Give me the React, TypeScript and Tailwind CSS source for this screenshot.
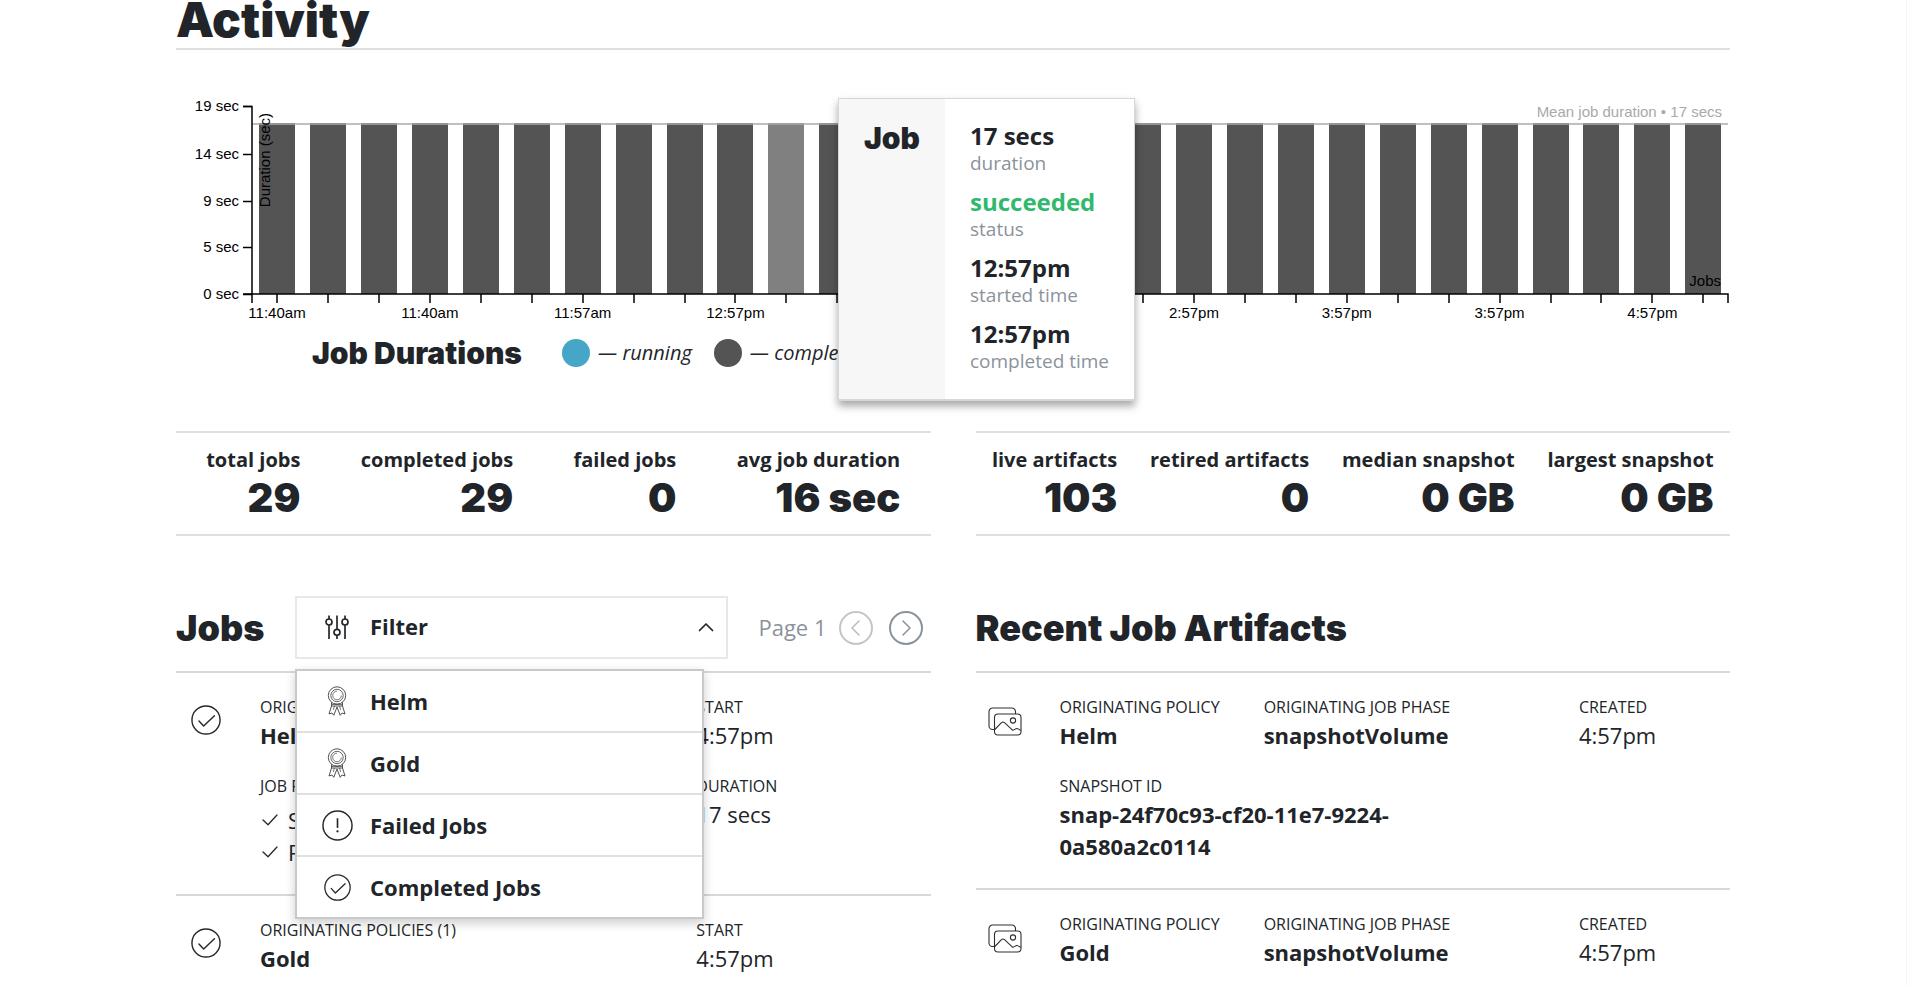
import { useState, type ReactNode } from "react";

const heading = "font-['Inter',sans-serif] font-black text-[#212529]";

/* ---------- icons ---------- */

function CheckCircle({ className }: { className: string }) {
  return (
    <svg viewBox="0 0 32 32" className={className} fill="none" stroke="#24282c" strokeWidth="1.5" aria-hidden="true">
      <circle cx="16" cy="16" r="15" />
      <path d="M8.5 17l5 5.500L25 11.500" strokeLinecap="round" strokeLinejoin="round" />
    </svg>
  );
}

function AlertCircle({ className }: { className: string }) {
  return (
    <svg viewBox="0 0 32 32" className={className} fill="none" stroke="#24282c" strokeWidth="1.5" aria-hidden="true">
      <circle cx="16" cy="16" r="15" />
      <path d="M16 8.500v10" strokeWidth="1.700" />
      <circle cx="16" cy="22" r="1.200" fill="#24282c" stroke="none" />
    </svg>
  );
}

function Check() {
  return (
    <svg viewBox="0 0 16 12" className="h-3 w-4" fill="none" stroke="#24282c" strokeWidth="1.300" aria-hidden="true">
      <path d="M1 6l5 4.800L15 1" strokeLinecap="round" strokeLinejoin="round" />
    </svg>
  );
}

function Sliders() {
  return (
    <svg viewBox="0 0 24 24" className="size-6" fill="none" stroke="#24282c" strokeWidth="1.700" aria-hidden="true">
      <path d="M4 .5v4M4 10v14M12 .5v14M12 20.500v3.500M20 .5v4M20 10v14" />
      <circle cx="4" cy="7" r="3" />
      <circle cx="12" cy="17.300" r="3" />
      <circle cx="20" cy="7" r="3" />
    </svg>
  );
}

function Ribbon() {
  return (
    <svg viewBox="0 0 20 30" className="h-[30px] w-5" fill="none" stroke="#3c4044" strokeWidth="0.900" strokeLinejoin="round" aria-hidden="true">
      <circle cx="10" cy="9.500" r="8.700" />
      <circle cx="10" cy="9.500" r="6.200" strokeWidth="0.800" />
      <path d="M10 5.200a4.300 4.300 0 1 0 4.300 4.300" strokeWidth="0.700" />
      <path d="M4.500 16.500v3.500h11v-3.500M5 18.300h10" />
      <path d="M4.500 20L2 28l3-1 1.800 2.300L10 21l3.200 8.300L15 27l3 1-2.500-8" />
      <path d="M7.500 20l-1.200 4M12.500 20l1.200 4" strokeWidth="0.700" />
    </svg>
  );
}

function Snapshots() {
  return (
    <svg viewBox="0 0 34 29" className="h-[29px] w-[34px]" fill="none" stroke="#2c3034" strokeWidth="1.100" strokeLinejoin="round" aria-hidden="true">
      <path d="M6.500 22.500H4.500a3.500 3.500 0 0 1-3.500-3.500V4.500A3.500 3.500 0 0 1 4.500 1h19.500a3.500 3.500 0 0 1 3.500 3.500V7" />
      <rect x="6.500" y="7" width="26.500" height="21" rx="3.500" />
      <path d="M6.800 22.500l6.700-6.800q1.500-1.400 3 0l7.500 7q1.200.9 2.800-.3t3-.7q1.200.3 3 1.800" />
      <circle cx="25" cy="13.500" r="2.600" />
    </svg>
  );
}

function Chevron({ d, className }: { d: string; className: string }) {
  return (
    <svg viewBox="0 0 16 16" className={className} fill="none" stroke="currentColor" strokeLinecap="round" strokeLinejoin="round" aria-hidden="true">
      <path d={d} />
    </svg>
  );
}

/* ---------- chart ---------- */

const BAR_COUNT = 29;
const FIRST_CENTER = 101;
const STEP = 50.94;
const BAR_WIDTH = 36;
const AXIS_X = 76;
const AXIS_END = 1552;
const AXIS_Y = 244;
const MEAN_Y = 74;
const HIGHLIGHTED = 10;

const yTicks = [
  { y: 56, label: "19 sec" },
  { y: 104, label: "14 sec" },
  { y: 151, label: "9 sec" },
  { y: 197, label: "5 sec" },
  { y: 244, label: "0 sec" },
];

/* One label for every third bar. */
const xLabels = [
  "11:40am", "11:40am", "11:57am", "12:57pm", "",
  "", "2:57pm", "3:57pm", "3:57pm", "4:57pm",
];

function DurationChart() {
  const centers = Array.from({ length: BAR_COUNT }, (_, i) => FIRST_CENTER + i * STEP);
  return (
    <svg
      viewBox="0 0 1554 276"
      className="block w-full font-['Liberation_Sans',sans-serif] text-[15px]"
      role="img"
      aria-label="Job durations"
    >
      {centers.map((c, i) => (
        <rect
          key={i}
          x={Math.round(c - BAR_WIDTH / 2)}
          y={73}
          width={BAR_WIDTH}
          height={AXIS_Y - 73}
          fill={i === HIGHLIGHTED ? "#808080" : "#545454"}
        />
      ))}
      <path d={`M${AXIS_X} ${MEAN_Y}H${AXIS_END}`} stroke="#a9adab" strokeWidth="1.500" />
      <path d={`M67 56.500H${AXIS_X}V${AXIS_Y}H67`} fill="none" stroke="#000" strokeWidth="1.500" />
      <path d={`M${AXIS_X} 253V${AXIS_Y}H${AXIS_END}V253`} fill="none" stroke="#000" strokeWidth="1.500" />
      {yTicks.map((t) => (
        <g key={t.label}>
          <path d={`M67 ${t.y + 0.5}H${AXIS_X}`} stroke="#000" strokeWidth="1.500" />
          <text x="63" y={t.y + 5} textAnchor="end">{t.label}</text>
        </g>
      ))}
      {centers.map((c, i) => (
        <path key={i} d={`M${Math.round(c)} ${AXIS_Y}V253`} stroke="#000" strokeWidth="1.500" />
      ))}
      {xLabels.map(
        (label, i) =>
          label && (
            <text key={i} x={FIRST_CENTER + i * 3 * STEP} y="268" textAnchor="middle">{label}</text>
          ),
      )}
      <text transform="translate(94 63) rotate(-90)" textAnchor="end">Duration (sec)</text>
      <text x="1545" y="236" textAnchor="end">Jobs</text>
      <text x="1546" y="67" textAnchor="end" fill="#a9a9a9">Mean job duration • 17 secs</text>
    </svg>
  );
}

function TooltipFact({ value, label, tone = "text-[#212529]" }: { value: string; label: string; tone?: string }) {
  return (
    <div className="flex flex-col-reverse">
      <dt className="text-[19px] leading-6 text-[#8a939b]">{label}</dt>
      <dd className={`text-2xl leading-[30px] font-bold ${tone}`}>{value}</dd>
    </div>
  );
}

function JobTooltip() {
  return (
    <div
      role="tooltip"
      className="absolute top-12 left-[662px] z-10 flex border border-b-2 border-[#d5d8d8] bg-white shadow-[0_5px_8px_rgba(0,0,0,0.35)]"
    >
      <div className="bg-[#f7f7f7] px-[25px] pt-[22px]">
        <h3 className={`${heading} text-[30px] leading-[34px]`}>Job</h3>
      </div>
      <dl className="flex flex-col gap-3 px-[25px] pt-[22px] pb-[26px]">
        <TooltipFact value="17 secs" label="duration" />
        <TooltipFact value="succeeded" label="status" tone="text-[#2fb96c]" />
        <TooltipFact value="12:57pm" label="started time" />
        <TooltipFact value="12:57pm" label="completed time" />
      </dl>
    </div>
  );
}

function LegendItem({ dot, label }: { dot: string; label: string }) {
  return (
    <li className="flex items-center gap-2">
      <span className={`size-7 rounded-full ${dot}`} />
      <span className="text-xl italic">— {label}</span>
    </li>
  );
}

/* ---------- stats ---------- */

function Stats({ items }: { items: [string, string][] }) {
  return (
    <dl className="flex justify-around border-y-2 border-[#dfdfdf] pt-[13px] pb-3 text-right">
      {items.map(([label, value]) => (
        <div key={label}>
          <dt className="text-xl leading-7 font-bold">{label}</dt>
          <dd className={`${heading} text-[40px] leading-[48px]`}>{value}</dd>
        </div>
      ))}
    </dl>
  );
}

/* ---------- lists ---------- */

function Field({ label, children, className = "" }: { label: string; children: ReactNode; className?: string }) {
  return (
    <div className={className}>
      <dt className="text-base leading-6 uppercase">{label}</dt>
      <dd className="text-[22px] leading-8">{children}</dd>
    </div>
  );
}

function Phase({ name }: { name: string }) {
  return (
    <li className="flex items-center gap-2.5 pl-0.5">
      <Check />
      {name}
    </li>
  );
}

function JobRow({ policy, start, duration }: { policy: string; start: string; duration: string }) {
  return (
    <li className="grid grid-cols-[84px_1fr] border-t-2 border-[#d8d8d8] pt-[22px] pb-[26px]">
      <CheckCircle className="mt-2.5 ml-[15px] size-[30px]" />
      <dl className="grid grid-cols-[436fr_234fr] gap-y-[23px]">
        <Field label="Originating policies (1)"><b>{policy}</b></Field>
        <Field label="Start">{start}</Field>
        <Field label="Job phases">
          <ul className="pt-1.5">
            <Phase name="Snapshot" />
            <Phase name="Retire" />
          </ul>
        </Field>
        <Field label="Duration">{duration}</Field>
      </dl>
    </li>
  );
}

function ArtifactRow({ policy, created, snapshot }: { policy: string; created: string; snapshot: string }) {
  return (
    <li className="grid grid-cols-[84px_1fr] border-t-2 border-[#d8d8d8] pt-[22px] pb-[26px]">
      <div className="pt-3 pl-3">
        <Snapshots />
      </div>
      <dl className="grid grid-cols-[204fr_315fr_151fr] gap-y-[23px]">
        <Field label="Originating policy"><b>{policy}</b></Field>
        <Field label="Originating job phase"><b>snapshotVolume</b></Field>
        <Field label="Created">{created}</Field>
        <Field label="Snapshot ID" className="col-span-3 max-w-[400px]"><b>{snapshot}</b></Field>
      </dl>
    </li>
  );
}

/* ---------- filter ---------- */

const filterOptions = [
  { label: "Helm", icon: <Ribbon /> },
  { label: "Gold", icon: <Ribbon /> },
  { label: "Failed Jobs", icon: <AlertCircle className="size-[31px]" /> },
  { label: "Completed Jobs", icon: <CheckCircle className="size-[27px]" /> },
];

function Filter() {
  const [open, setOpen] = useState(true);
  return (
    <div className="relative grow">
      <button
        type="button"
        aria-expanded={open}
        onClick={() => setOpen(!open)}
        className="flex h-[63px] w-full items-center border-2 border-[#e8e8e8] bg-white pr-3 pb-0.5 text-[22px] font-bold"
      >
        <span className="flex w-[73px] justify-center pl-[7px]"><Sliders /></span>
        <span className="grow text-left">Filter</span>
        <Chevron d="M1.500 11.500L8 5l6.500 6.500" className="size-4 stroke-[1.7]" />
      </button>
      {open && (
        <ul className="absolute top-[73px] right-6 left-0 z-10 divide-y-2 divide-[#e0e0e0] border-2 border-[#c8caca] bg-white shadow-[0_4px_10px_rgba(0,0,0,0.2)]">
          {filterOptions.map((o) => (
            <li key={o.label}>
              <button type="button" className="flex h-[60px] w-full items-center text-[22px] font-bold">
                <span className="flex w-[73px] justify-center pl-[7px]">{o.icon}</span>
                <span>{o.label}</span>
              </button>
            </li>
          ))}
        </ul>
      )}
    </div>
  );
}

export default function App() {
  return (
    <div className="h-screen overflow-hidden border-r border-[#f4f4f4] bg-white px-44 font-['Open_Sans','Noto_Sans',sans-serif] text-[#212529]">
      <h1 className={`${heading} border-b-2 border-[#dfdfdf] pb-2 text-5xl leading-10`}>Activity</h1>

      <section className="relative">
        <DurationChart />
        <div className="flex h-[54px] items-center pl-[136px]">
          <h2 className={`${heading} text-[30px] leading-[34px]`}>Job Durations</h2>
          <ul className="flex gap-[22px] pl-10">
            <LegendItem dot="bg-[#45a6c8]" label="running" />
            <LegendItem dot="bg-[#545454]" label="completed" />
          </ul>
        </div>
        <JobTooltip />
      </section>

      <div className="mt-[51px] grid grid-cols-2 gap-x-[45px]">
        <Stats
          items={[
            ["total jobs", "29"],
            ["completed jobs", "29"],
            ["failed jobs", "0"],
            ["avg job duration", "16 sec"],
          ]}
        />
        <Stats
          items={[
            ["live artifacts", "103"],
            ["retired artifacts", "0"],
            ["median snapshot", "0 GB"],
            ["largest snapshot", "0 GB"],
          ]}
        />
      </div>

      <div className="mt-[60px] grid grid-cols-2 gap-x-[45px]">
        <section>
          <div className="flex items-center pb-3">
            <h2 className={`${heading} w-[119px] text-4xl`}>Jobs</h2>
            <Filter />
            <div className="flex items-center pr-2 pl-[30px] text-[#8a939b]">
              <span className="mr-3 text-[22px]">Page 1</span>
              <button
                type="button"
                disabled
                aria-label="Previous page"
                className="mr-4 flex size-[34px] items-center justify-center rounded-full border-2 border-[#c4c6c8] text-[#b9bcbf]"
              >
                <Chevron d="M11 1L4 8l7 7" className="size-4 stroke-[1.5]" />
              </button>
              <button
                type="button"
                aria-label="Next page"
                className="flex size-[34px] items-center justify-center rounded-full border-2 border-[#8a939b]"
              >
                <Chevron d="M5 1l7 7-7 7" className="size-4 stroke-[1.5]" />
              </button>
            </div>
          </div>
          <ul>
            <JobRow policy="Helm" start="4:57pm" duration="17 secs" />
            <JobRow policy="Gold" start="4:57pm" duration="17 secs" />
          </ul>
        </section>

        <section>
          <div className="flex h-[75px] items-center pb-3">
            <h2 className={`${heading} text-4xl`}>Recent Job Artifacts</h2>
          </div>
          <ul>
            <ArtifactRow policy="Helm" created="4:57pm" snapshot="snap-24f70c93-cf20-11e7-9224-0a580a2c0114" />
            <ArtifactRow policy="Gold" created="4:57pm" snapshot="snap-24f70c93-cf20-11e7-9224-0a580a2c0114" />
          </ul>
        </section>
      </div>
    </div>
  );
}
